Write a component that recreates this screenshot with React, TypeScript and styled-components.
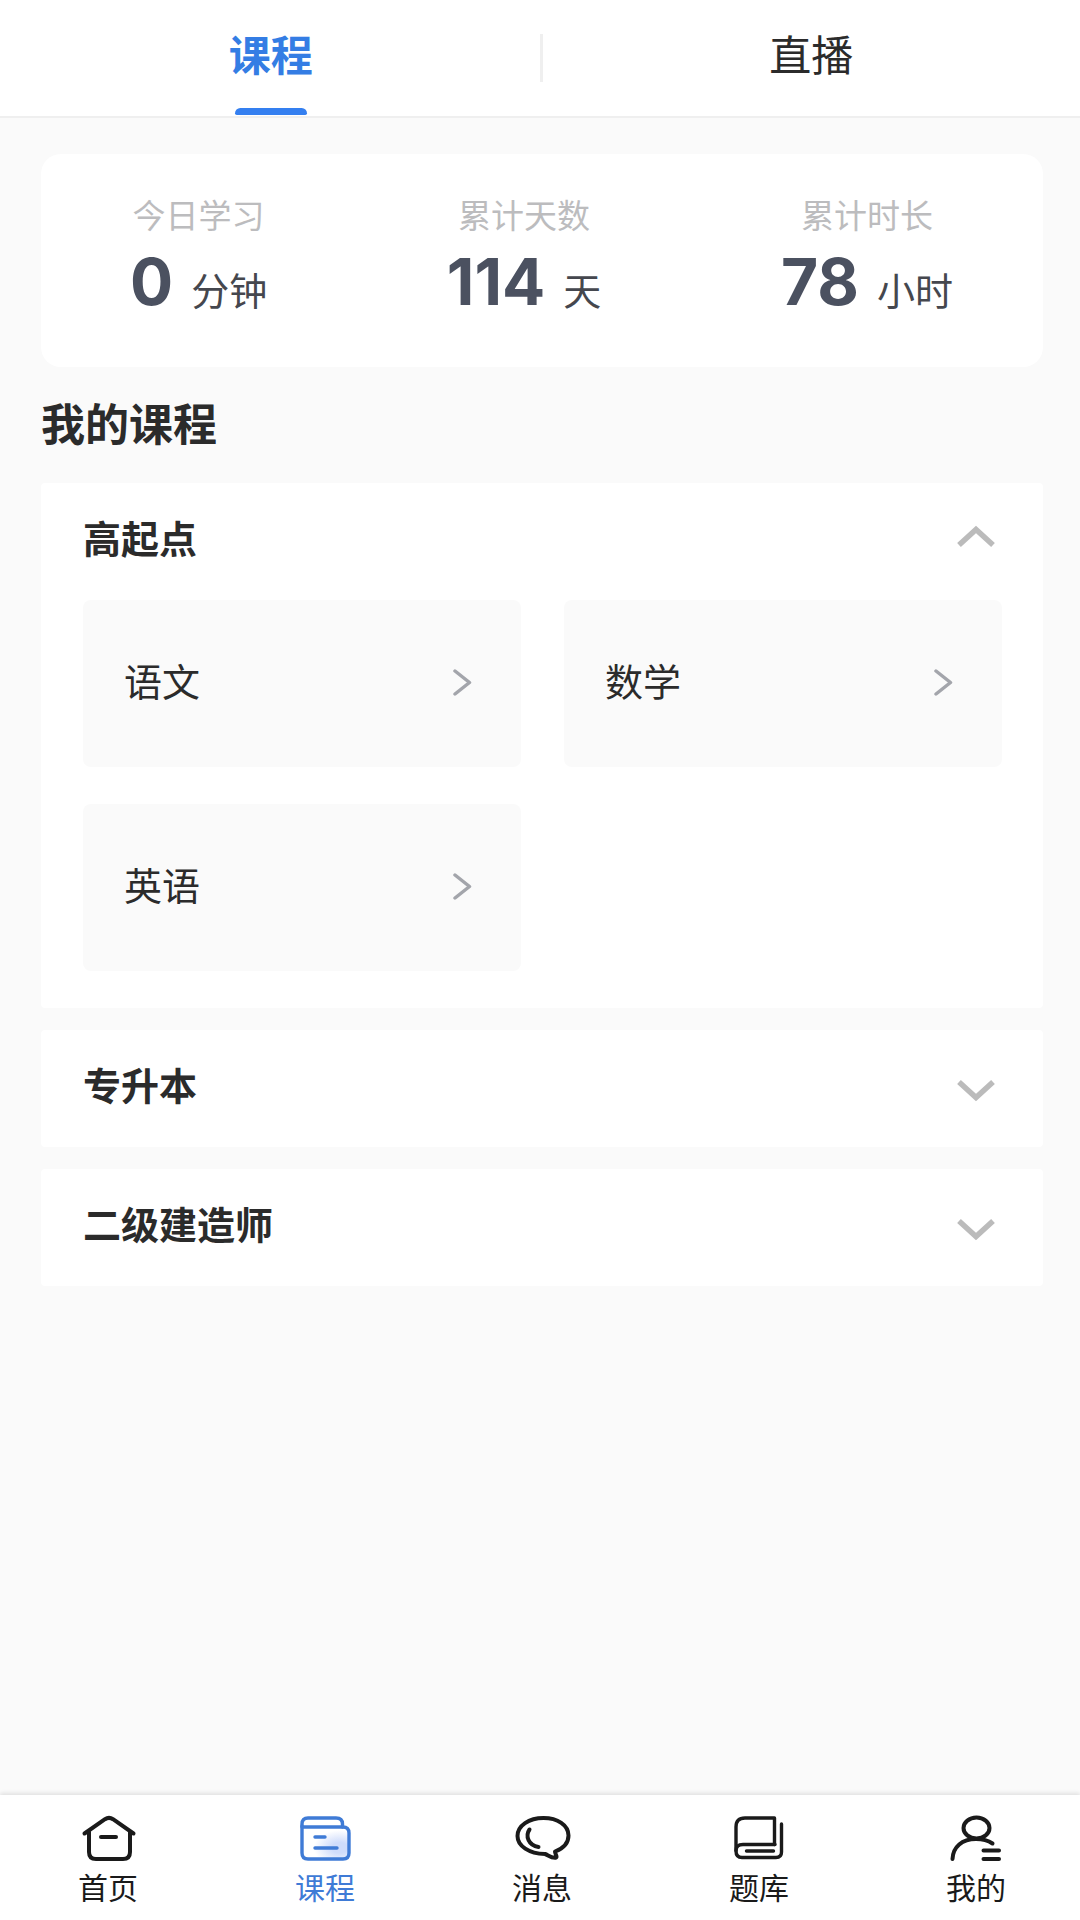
import React, { useState } from "react";
import styled, { createGlobalStyle } from "styled-components";

const GlobalStyle = createGlobalStyle`
  *, *::before, *::after { box-sizing: border-box; }
  body {
    margin: 0;
    background: #fafafa;
    color: #2b2b2b;
    font-family: "Noto Sans CJK SC", "Noto Sans", sans-serif;
  }
  button { font: inherit; color: inherit; border: 0; padding: 0; background: none; cursor: pointer; }
  h1, h2, p, ul { margin: 0; padding: 0; }
`;

const Page = styled.div`
  display: flex;
  flex-direction: column;
  min-height: 100vh;
`;

const TabBar = styled.header`
  display: flex;
  align-items: center;
  height: 118px;
  padding-left: 2px;
  background: #fff;
  border-bottom: 2px solid #efefef;
`;

const Divider = styled.span`
  width: 3px;
  height: 48px;
  background: #efefef;
`;

const Tab = styled.button<{ $active: boolean }>`
  position: relative;
  flex: 1;
  height: 100%;
  padding-bottom: 10px;
  font-size: 42px;
  line-height: 48px;
  font-weight: ${(p) => (p.$active ? 700 : 400)};
  color: ${(p) => (p.$active ? "#347de4" : "#2b2b2b")};

  &::after {
    content: "";
    display: ${(p) => (p.$active ? "block" : "none")};
    position: absolute;
    left: 50%;
    bottom: 1px;
    width: 72px;
    height: 7px;
    margin-left: -36px;
    border-radius: 6px 6px 2px 2px;
    background: #347ff0;
  }
`;

const Content = styled.main`
  flex: 1;
  padding: 36px 37px 40px 41px;
`;

const Stats = styled.section`
  display: flex;
  justify-content: space-between;
  padding: 36px 90px 40px 89px;
  border-radius: 20px;
  background: #fff;
`;

const Stat = styled.div`
  display: flex;
  flex-direction: column;
  align-items: center;
  gap: 6px;
`;

const StatLabel = styled.p`
  font-size: 33px;
  line-height: 48px;
  color: #bcbcbe;
`;

const StatValue = styled.p`
  display: flex;
  align-items: baseline;
  gap: 18px;
  line-height: 76px;
  color: #4b5160;
`;

const StatNumber = styled.span`
  font-family: Inter, "Noto Sans", sans-serif;
  font-size: 64px;
  font-weight: 700;
`;

const StatUnit = styled.span`
  font-size: 38px;
  color: #45474e;
`;

const Title = styled.h1`
  padding: 30px 0 36px;
  font-size: 44px;
  line-height: 50px;
  font-weight: 700;
`;

const Groups = styled.div`
  display: flex;
  flex-direction: column;
  gap: 22px;
`;

const Group = styled.section`
  border-radius: 4px;
  background: #fff;
`;

const GroupTitle = styled.h2`
  font-size: 38px;
  line-height: 56px;
  font-weight: 700;
`;

const GroupToggle = styled.button`
  display: flex;
  align-items: center;
  justify-content: space-between;
  width: 100%;
  height: 117px;
  padding: 0 47px 10px 42px;
  font-weight: 700;
  text-align: left;

  svg { display: block; }
`;

const Subjects = styled.div`
  display: grid;
  grid-template-columns: 1fr 1fr;
  gap: 37px 43px;
  padding: 0 41px 37px 42px;
`;

const Subject = styled.button`
  display: flex;
  align-items: center;
  justify-content: space-between;
  height: 167px;
  padding: 0 48px 8px 41px;
  border-radius: 8px;
  background: #fafafa;
  font-size: 38px;
  line-height: 56px;
`;

const Nav = styled.nav`
  display: flex;
  justify-content: space-between;
  height: 125px;
  padding: 0 74px 0 78px;
  background: #fff;
  box-shadow: 0 -2px 4px rgba(0, 0, 0, 0.1);
`;

const NavItem = styled.a<{ $active: boolean }>`
  display: flex;
  flex-direction: column;
  align-items: center;
  padding-top: 19px;
  font-size: 30px;
  line-height: 44px;
  text-decoration: none;
  color: ${(p) => (p.$active ? "#3f7bd6" : "#1a1a1a")};

  svg { display: block; }
`;

function Fold({ open }: { open: boolean }) {
  return (
    <svg width="40" height="36" viewBox="0 0 40 36" fill="none" stroke="#bbb" strokeWidth="5.500" aria-hidden="true">
      <path d={open ? "M3 26L20 10.500L37 26" : "M3 16L20 31.500L37 16"} />
    </svg>
  );
}

function Arrow() {
  return (
    <svg width="22" height="32" viewBox="0 0 22 32" fill="none" stroke="#a3a5ab" strokeWidth="3.500" strokeLinecap="round" strokeLinejoin="round" aria-hidden="true">
      <path d="M4 7L18.500 18.500L4 30" />
    </svg>
  );
}

const iconPaths: Record<string, React.ReactNode> = {
  home: (
    <>
      <path d="M6.500 19.500L27 5.200Q31 2.600 35 5.200L55.500 19.500" />
      <path d="M11 18V38Q11 45 18 45H45Q52 45 52 38V18" />
      <path d="M23 23H38" />
    </>
  ),
  course: (
    <>
      <defs>
        <radialGradient id="courseGlow" cx="0.8" cy="0.65" r="0.55">
          <stop offset="0.3" stopColor="#cfdcfb" />
          <stop offset="1" stopColor="#cfdcfb" stopOpacity="0" />
        </radialGradient>
      </defs>
      <rect x="7" y="13" width="47" height="32" rx="5" fill="url(#courseGlow)" stroke="none" />
      <path d="M7 13V10Q7 4 13 4H41Q47.500 4 47.500 10V13" />
      <path d="M7 12V39Q7 45 13 45H48Q54 45 54 39V19Q54 13 48 13H8" />
      <path d="M20 23H30M20 34H42" />
    </>
  ),
  message: (
    <>
      <path d="M43 37.500C51 34.500 56.500 29 56.500 21.500C56.500 11 45.500 4 31.500 4C17 4 5.500 11.500 5.500 22C5.500 32 17 39.500 33 40C36 41 39 44.200 43.500 43.800C46 43.200 43 40 43 37.500Z" />
      <path d="M17.500 15.500C13 22 16.500 31.500 26.500 33" />
    </>
  ),
  bank: (
    <>
      <path d="M45.500 30.500V4H16Q7 4 7 13V37Q7 43.500 13 43.500H47Q52.500 43.500 52.500 38V10" />
      <path d="M46 30.500H14Q7 30.500 7 36.500M17.500 37H44.500" />
    </>
  ),
  mine: (
    <>
      <ellipse cx="30.500" cy="14" rx="13" ry="10.500" />
      <path d="M6.500 45C7 33 16 25 30 25Q40 25 46.500 29.500" />
      <path d="M37.500 36.500H53M37.500 45H53" />
    </>
  ),
};

function NavIcon({ name }: { name: string }) {
  return (
    <svg width="60" height="50" viewBox="0 0 60 50" fill="none" stroke="currentColor" strokeWidth={name === "course" || name === "bank" ? 3.4 : 4} strokeLinecap="round" strokeLinejoin="round" aria-hidden="true">
      {iconPaths[name]}
    </svg>
  );
}

const tabs = ["课程", "直播"];

const stats = [
  { label: "今日学习", value: "0", unit: "分钟" },
  { label: "累计天数", value: "114", unit: "天" },
  { label: "累计时长", value: "78", unit: "小时" },
];

const groups = [
  { name: "高起点", subjects: ["语文", "数学", "英语"] },
  { name: "专升本", subjects: [] },
  { name: "二级建造师", subjects: [] },
];

const navItems = [
  { icon: "home", label: "首页" },
  { icon: "course", label: "课程" },
  { icon: "message", label: "消息" },
  { icon: "bank", label: "题库" },
  { icon: "mine", label: "我的" },
];

export default function App() {
  const [tab, setTab] = useState("课程");
  const [open, setOpen] = useState("高起点");

  return (
    <Page>
      <GlobalStyle />
      <TabBar>
        {tabs.map((name, i) => (
          <React.Fragment key={name}>
            {i > 0 && <Divider />}
            <Tab type="button" $active={tab === name} aria-pressed={tab === name} onClick={() => setTab(name)}>
              {name}
            </Tab>
          </React.Fragment>
        ))}
      </TabBar>
      <Content>
        <Stats>
          {stats.map((s) => (
            <Stat key={s.label}>
              <StatLabel>{s.label}</StatLabel>
              <StatValue>
                <StatNumber>{s.value}</StatNumber>
                <StatUnit>{s.unit}</StatUnit>
              </StatValue>
            </Stat>
          ))}
        </Stats>
        <Title>我的课程</Title>
        <Groups>
          {groups.map((g) => {
            const isOpen = open === g.name;
            return (
              <Group key={g.name}>
                <GroupTitle>
                  <GroupToggle type="button" aria-expanded={isOpen} onClick={() => setOpen(isOpen ? "" : g.name)}>
                    {g.name}
                    <Fold open={isOpen} />
                  </GroupToggle>
                </GroupTitle>
                {isOpen && g.subjects.length > 0 && (
                  <Subjects>
                    {g.subjects.map((name) => (
                      <Subject key={name} type="button">
                        {name}
                        <Arrow />
                      </Subject>
                    ))}
                  </Subjects>
                )}
              </Group>
            );
          })}
        </Groups>
      </Content>
      <Nav>
        {navItems.map((n) => (
          <NavItem key={n.icon} href={`#${n.icon}`} $active={n.icon === "course"}>
            <NavIcon name={n.icon} />
            {n.label}
          </NavItem>
        ))}
      </Nav>
    </Page>
  );
}
